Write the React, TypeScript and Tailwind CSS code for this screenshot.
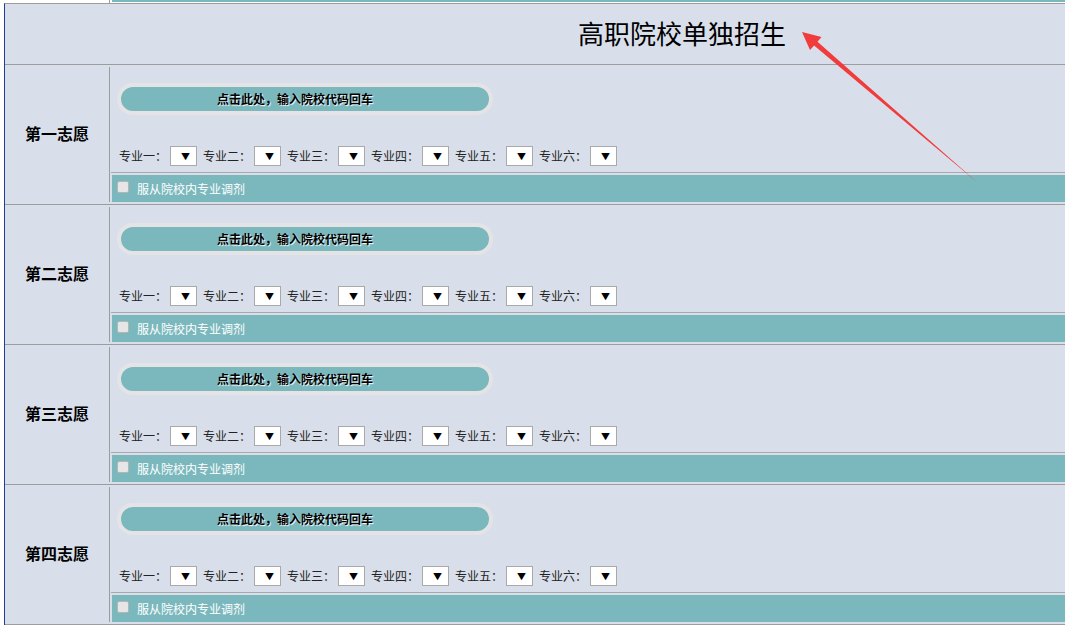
const FONT = "font-['Microsoft_YaHei','Noto_Sans_CJK_SC',sans-serif]"

const choices = ['第一志愿', '第二志愿', '第三志愿', '第四志愿']
const majors = ['专业一', '专业二', '专业三', '专业四', '专业五', '专业六']

function FakeSelect() {
  return (
    <div className="flex h-[20px] w-[27px] shrink-0 items-center justify-end border border-[#a9a9a9] bg-white pr-[6px] text-[9px] leading-none text-black">
      ▼
    </div>
  )
}

function ChoiceRow({ label }: { label: string }) {
  return (
    <div className="flex h-[140px] border-b border-[#9d9d9d]">
      <div className="flex w-[104px] shrink-0 items-center justify-center pb-[3px] text-[16px] font-bold text-black">{label}</div>
      <div className="my-[2px] w-px bg-[#9d9d9d]" />
      <div className="flex min-w-0 flex-1 flex-col">
        <div className="pl-[7px] pt-[18px]">
          <button className="box-border flex h-[32px] w-[376px] items-center justify-center rounded-full border-[4px] border-[#e4e4e6] bg-[#7bb8bd] pr-[20px] text-[12px] font-bold leading-none text-black [text-shadow:1px_1px_1px_#fff]">
            点击此处，输入院校代码回车
          </button>
        </div>
        <div className="mt-[31px] flex h-[20px] items-center pl-[9px] text-[12px] leading-none text-[#222]">
          {majors.map((m) => (
            <div key={m} className="mr-[6px] flex shrink-0 items-center gap-[3px]">
              <span className="w-[48px] whitespace-nowrap">{m}：</span>
              <FakeSelect />
            </div>
          ))}
        </div>
        <div className="ml-px mt-[6px] h-px bg-[#a8a8a8]" />
        <div className="ml-[2px] mt-[2px] flex h-[27px] items-center bg-[#7bb8bd] pl-[5px] text-[12px] leading-none text-white">
          <span className="mb-[3px] mr-[8px] h-[12px] w-[12px] rounded-[2px] border border-[#b5b5b5] bg-[#e6e6e6]" />
          服从院校内专业调剂
        </div>
      </div>
    </div>
  )
}

export default function App() {
  return (
    <div className={`relative h-[625px] w-[1065px] overflow-hidden bg-white ${FONT}`}>
      {/* tail of the row above */}
      <div className="flex h-[3px]">
        <div className="w-[109px]" />
        <div className="w-px bg-[#9d9d9d]" />
        <div className="ml-[2px] h-[2px] flex-1 bg-[#7bb8bd]" />
      </div>
      <div className="ml-[4px] border-l border-t border-[#1c3f94] border-t-[#9d9d9d] bg-[#d9dfea]">
        <div className="flex h-[61px] items-center border-b border-[#9d9d9d] pl-[573px] pb-[2px] text-[26px] leading-none text-black">
          高职院校单独招生
        </div>
        {choices.map((c) => (
          <ChoiceRow key={c} label={c} />
        ))}
      </div>
      {/* annotation arrow */}
      <svg className="pointer-events-none absolute left-0 top-0" width="1065" height="625">
        <polygon points="802,32 821.5,37 817.5,41.8 978,183 814.1,45.6 810,50" fill="#f23b3b" />
      </svg>
    </div>
  )
}
